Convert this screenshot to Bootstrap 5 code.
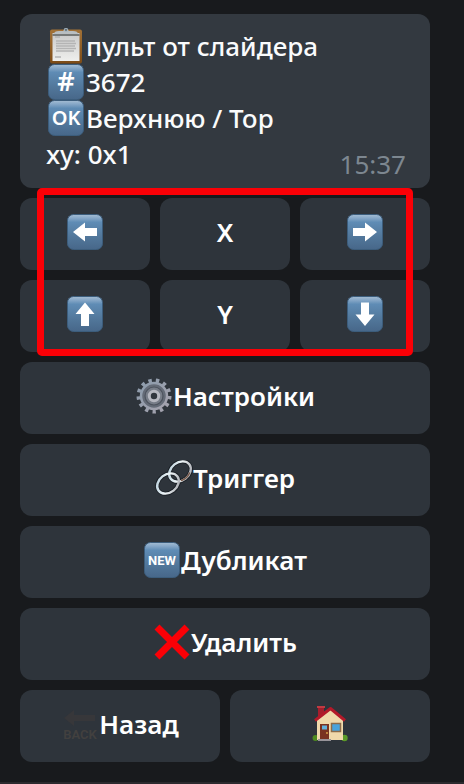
<!DOCTYPE html>
<html lang="ru">
<head>
<meta charset="utf-8">
<meta name="viewport" content="width=device-width, initial-scale=1">
<title>Пульт от слайдера</title>
<link href="https://cdn.jsdelivr.net/npm/bootstrap@5.3.0/dist/css/bootstrap.min.css" rel="stylesheet">
<style>
  body {
    background: #181a1d;
    color: #fafbfc;
    font-family: "Noto Sans", "Open Sans", sans-serif;
    font-size: 26px;
    line-height: 36px;
  }
  .chat { padding: 14px 34px 20px 20px; gap: 10px; border-bottom: 2px solid #2b2a2e; }
  .bubble { background: #333940; border-radius: 12px; padding: 14px 24px 12px 26px; }
  .message { font-weight: 500; }
  .stamp { color: #7d8790; line-height: 24px; }
  .keys { gap: 10px; }
  .key {
    --bs-btn-color: #fff;
    --bs-btn-bg: #2e343b;
    --bs-btn-border-width: 0;
    --bs-btn-hover-color: #fff;
    --bs-btn-hover-bg: #383f47;
    --bs-btn-active-color: #fff;
    --bs-btn-active-bg: #252a30;
    --bs-btn-font-family: inherit;
    --bs-btn-font-size: 26px;
    --bs-btn-font-weight: 600;
    --bs-btn-line-height: 36px;
    --bs-btn-border-radius: 12px;
    height: 72px;
    padding: 0 0 4px;
    flex: 1 1 0;
  }
  .emo { width: 38px; height: 36px; flex: none; }
  .bubble .emo { margin-left: 1px; margin-right: 1px; }
  .marker {
    inset: -10px 17px -4px 17px;
    border: 7px solid #fb0006;
    border-radius: 5px;
    pointer-events: none;
  }
  svg text { font-family: "Noto Sans", sans-serif; font-weight: 600; fill: #fff; text-anchor: middle; }
  svg .tiny { font-family: Roboto, sans-serif; font-weight: 700; }
  svg .faded { font-family: Roboto, sans-serif; fill: #42403f; }
</style>
</head>
<body>
<svg width="0" height="0" class="position-absolute" aria-hidden="true">
  <defs>
    <linearGradient id="blue" x1="0" y1="0" x2="0" y2="1">
      <stop offset="0" stop-color="#a5bdd3"/><stop offset=".1" stop-color="#87a8c8"/>
      <stop offset=".22" stop-color="#5f8cb5"/><stop offset=".6" stop-color="#53799d"/><stop offset="1" stop-color="#476789"/>
    </linearGradient>
    <linearGradient id="wood" x1="0" y1="0" x2="0" y2="1"><stop offset="0" stop-color="#a37237"/><stop offset="1" stop-color="#7d4b16"/></linearGradient>
    <linearGradient id="paper" x1="0" y1="0" x2="0" y2="1"><stop offset="0" stop-color="#c9c9c9"/><stop offset="1" stop-color="#efefed"/></linearGradient>
    <linearGradient id="steel" x1="0" y1="0" x2="1" y2="1"><stop offset="0" stop-color="#8c9bac"/><stop offset="1" stop-color="#a6a3ae"/></linearGradient>
    <linearGradient id="chain" x1="0" y1="0" x2="1" y2="1"><stop offset="0" stop-color="#b4cbd8"/><stop offset=".5" stop-color="#f1f7f9"/><stop offset="1" stop-color="#9c9da4"/></linearGradient>
    <symbol id="tile" viewBox="0 0 38 36">
      <rect x="1.5" y=".5" width="35" height="35" rx="6" fill="url(#blue)" stroke="#3c5d7c"/>
    </symbol>
  </defs>
</svg>

<main class="chat d-flex flex-column">
  <section class="bubble d-flex justify-content-between align-items-end">
    <div class="message pb-1">
      <div class="d-flex">
        <svg class="emo" viewBox="0 0 38 36" aria-hidden="true">
          <rect x="3" y="1.5" width="32" height="34" rx="2" fill="url(#wood)"/>
          <path d="M5.5 5h27v28h-27z" fill="url(#paper)"/>
          <path d="M8 9h5M9 13h19M9 15.500h20M9 18h19M9 20.500h20M9 23h18M8 29h6" stroke="#b4b4b4" stroke-width="1.5"/>
          <path d="M5.5 7h27" stroke="#5d5f5e" stroke-width="1.5"/>
          <path d="M7 6q0-3 5-3h4a3.500 3.500 0 0 1 6 0h4q5 0 5 3z" fill="#b9bec1"/>
          <circle cx="19" cy="1.8" r="1.7" fill="#69747b" stroke="#a9bac5"/>
        </svg><span>пульт от слайдера</span>
      </div>
      <div class="d-flex">
        <svg class="emo" viewBox="0 0 38 36" aria-hidden="true"><use href="#tile"/><text x="19" y="27" font-size="27">#</text></svg><span>3672</span>
      </div>
      <div class="d-flex">
        <svg class="emo" viewBox="0 0 38 36" aria-hidden="true"><use href="#tile"/><text x="19" y="25" font-size="20">OK</text></svg><span>Верхнюю / Top</span>
      </div>
      <div>xy: 0x1</div>
    </div>
    <time class="stamp">15:37</time>
  </section>

  <div class="keys position-relative d-flex flex-column">
    <div class="keys d-flex">
      <button type="button" class="btn key d-flex align-items-center justify-content-center" aria-label="Влево">
        <svg class="emo" viewBox="0 0 38 36" aria-hidden="true"><use href="#tile"/><path d="M7 18 19 8.500V14h12v8H19v5.500z" fill="#fff"/></svg>
      </button>
      <button type="button" class="btn key">X</button>
      <button type="button" class="btn key d-flex align-items-center justify-content-center" aria-label="Вправо">
        <svg class="emo" viewBox="0 0 38 36" aria-hidden="true"><use href="#tile"/><path d="M31 18 19 8.500V14H7v8h12v5.500z" fill="#fff"/></svg>
      </button>
    </div>
    <div class="keys d-flex">
      <button type="button" class="btn key d-flex align-items-center justify-content-center" aria-label="Вверх">
        <svg class="emo" viewBox="0 0 38 36" aria-hidden="true"><use href="#tile"/><path d="M19 6.500 9.500 18H15v12h8V18h5.500z" fill="#fff"/></svg>
      </button>
      <button type="button" class="btn key">Y</button>
      <button type="button" class="btn key d-flex align-items-center justify-content-center" aria-label="Вниз">
        <svg class="emo" viewBox="0 0 38 36" aria-hidden="true"><use href="#tile"/><path d="M19 30 9.500 18.500H15v-12h8v12h5.500z" fill="#fff"/></svg>
      </button>
    </div>
    <div class="marker position-absolute"></div>
  </div>

  <div class="d-flex">
    <button type="button" class="btn key d-flex align-items-center justify-content-center">
      <svg class="emo" viewBox="0 0 38 36" aria-hidden="true">
        <circle cx="19" cy="18" r="15.500" fill="none" stroke="url(#steel)" stroke-width="4" pathLength="130" stroke-dasharray="4.500 5.500"/>
        <circle cx="19" cy="18" r="13" fill="#646b77" stroke="url(#steel)" stroke-width="2.500"/>
        <circle cx="19" cy="18" r="9" fill="#777d88" stroke="#4d535e" stroke-width="1.200"/>
        <circle cx="19" cy="18" r="4.700" fill="#30363e" stroke="#b6b8c1" stroke-width="3"/>
      </svg><span>Настройки</span>
    </button>
  </div>
  <div class="d-flex">
    <button type="button" class="btn key d-flex align-items-center justify-content-center">
      <svg class="emo" viewBox="0 0 38 36" aria-hidden="true">
        <g fill="none" stroke-linecap="round">
          <g stroke="#191e24" stroke-width="4"><ellipse cx="25" cy="11.500" rx="11.800" ry="9" transform="rotate(-38 25 11.500)"/><ellipse cx="13" cy="23.500" rx="11.800" ry="9" transform="rotate(-38 13 23.500)"/></g>
          <g stroke="url(#chain)" stroke-width="2.400"><ellipse cx="25" cy="11.500" rx="11.800" ry="9" transform="rotate(-38 25 11.500)"/><ellipse cx="13" cy="23.500" rx="11.800" ry="9" transform="rotate(-38 13 23.500)"/></g>
          <path d="M34.500 13q-2 5-8 7.500" stroke="#795a4b" stroke-width="1.500"/>
        </g>
      </svg><span>Триггер</span>
    </button>
  </div>
  <div class="d-flex">
    <button type="button" class="btn key d-flex align-items-center justify-content-center">
      <svg class="emo" viewBox="0 0 38 36" aria-hidden="true"><use href="#tile"/><text class="tiny" x="19" y="23" font-size="13">NEW</text></svg><span>Дубликат</span>
    </button>
  </div>
  <div class="d-flex">
    <button type="button" class="btn key d-flex align-items-center justify-content-center">
      <svg class="emo" viewBox="0 0 38 36" aria-hidden="true"><path d="M4 3 34 33M34 3 4 33" stroke="#fb0006" stroke-width="7"/></svg><span>Удалить</span>
    </button>
  </div>
  <div class="keys d-flex">
    <button type="button" class="btn key d-flex align-items-center justify-content-center">
      <svg class="emo" viewBox="0 0 38 36" aria-hidden="true">
        <path d="M3 12 13 4v5h21v6H13v5z" fill="#37373a"/>
        <text class="faded" x="19" y="33" font-size="13">BACK</text>
      </svg><span>Назад</span>
    </button>
    <button type="button" class="btn key d-flex align-items-center justify-content-center" aria-label="Домой">
      <svg class="emo" viewBox="0 0 38 36" aria-hidden="true">
        <path d="M7 1h6v11H7z" fill="#a51e2c"/><path d="M6 0h8v2H6z" fill="#c13a42"/>
        <circle cx="4.500" cy="32" r="3" fill="#4d8a1f"/><circle cx="33.500" cy="32" r="3.200" fill="#5c9a28"/>
        <path d="M6 14 19.500 3 32 14v20H6z" fill="#f0d9ab"/>
        <path d="M4 14.500 19.500 2.500 34 14.500" fill="none" stroke="#b31929" stroke-width="3" stroke-linejoin="round"/>
        <path d="M9 18h9v15H9z" fill="#7a3220"/><path d="M11 19.500h5v4h-5z" fill="#62b0dc"/>
        <circle cx="16" cy="27" r=".9" fill="#e3ae4b"/>
        <path d="M20.500 17.500h9v8h-9z" fill="#4aa3dc" stroke="#8b6b4a" stroke-width="1.500"/>
        <path d="M7 33h13v2H7z" fill="#98949a"/>
      </svg>
    </button>
  </div>
</main>
<script src="https://cdn.jsdelivr.net/npm/bootstrap@5.3.0/dist/js/bootstrap.bundle.min.js"></script>
</body>
</html>
